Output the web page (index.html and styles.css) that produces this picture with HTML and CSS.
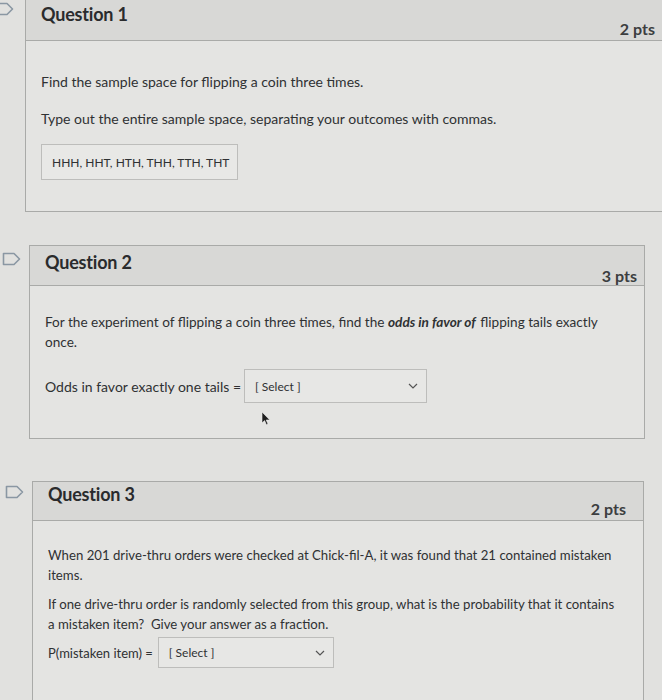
FILE: index.html
```html
<!DOCTYPE html>
<html>
<head>
<meta charset="utf-8">
<link rel="stylesheet" href="styles.css">
</head>
<body>
<div class="topshade"></div>
<div class="quiz">
  <section class="question q1">
    <div class="flag"><svg width="20" height="16" viewBox="0 0 20 16"><path d="M1.5 2.5h10.5l5.5 5.5-5.5 5.5H1.5z" fill="none" stroke="#8a97a3" stroke-width="1.6" stroke-linejoin="round"/></svg></div>
    <div class="card">
      <header class="head">
        <h2 class="title">Question 1</h2>
        <span class="pts">2 pts</span>
      </header>
      <div class="body">
        <p class="txt">Find the sample space for flipping a coin three times.</p>
        <p class="txt gap">Type out the entire sample space, separating your outcomes with commas.</p>
        <div class="answer">HHH, HHT, HTH, THH, TTH, THT</div>
      </div>
    </div>
  </section>

  <section class="question q2">
    <div class="flag"><svg width="20" height="16" viewBox="0 0 20 16"><path d="M1.5 2.5h10.5l5.5 5.5-5.5 5.5H1.5z" fill="none" stroke="#8a97a3" stroke-width="1.6" stroke-linejoin="round"/></svg></div>
    <div class="card">
      <header class="head">
        <h2 class="title">Question 2</h2>
        <span class="pts">3 pts</span>
      </header>
      <div class="body">
        <p class="txt">For the experiment of flipping a coin three times, find the <b class="em">odds in favor of</b> flipping tails exactly once.</p>
        <div class="line">
          <span class="label">Odds in favor exactly one tails =</span>
          <div class="select s2"><span>[ Select ]</span><svg width="10" height="6" viewBox="0 0 10 6"><path d="M1 1l4 4 4-4" fill="none" stroke="#555" stroke-width="1.2"/></svg></div>
        </div>
        <svg class="cursor" width="10" height="15" viewBox="0 0 10 15"><path d="M1 1v11l2.6-2.4 1.8 4.2 1.6-.7-1.8-4.1H8.8z" fill="#1e1e1e" stroke="#f2f2f2" stroke-width="0.6" stroke-linejoin="round"/></svg>
      </div>
    </div>
  </section>

  <section class="question q3">
    <div class="flag"><svg width="20" height="16" viewBox="0 0 20 16"><path d="M1.5 2.5h10.5l5.5 5.5-5.5 5.5H1.5z" fill="none" stroke="#8a97a3" stroke-width="1.6" stroke-linejoin="round"/></svg></div>
    <div class="card">
      <header class="head">
        <h2 class="title">Question 3</h2>
        <span class="pts">2 pts</span>
      </header>
      <div class="body">
        <p class="txt">When 201 drive-thru orders were checked at Chick-fil-A, it was found that 21 contained mistaken items.</p>
        <p class="txt gap">If one drive-thru order is randomly selected from this group, what is the probability that it contains a mistaken item?&nbsp; Give your answer as a fraction.</p>
        <div class="line">
          <span class="label small">P(mistaken item) =</span>
          <div class="select s3"><span>[ Select ]</span><svg width="10" height="6" viewBox="0 0 10 6"><path d="M1 1l4 4 4-4" fill="none" stroke="#555" stroke-width="1.2"/></svg></div>
        </div>
      </div>
    </div>
  </section>
</div>
</body>
</html>
```

FILE: styles.css
```css
html, body {
  margin: 0;
  padding: 0;
}
body {
  width: 662px;
  height: 700px;
  overflow: hidden;
  background: #e1e1df;
  font-family: Lato, "Open Sans", sans-serif;
  color: #2f3133;
  position: relative;
}
.topshade {
  position: absolute;
  left: 300px;
  right: 0;
  top: 0;
  height: 2px;
  background: linear-gradient(90deg, rgba(60,70,80,0), rgba(60,70,80,0.7));
}
.quiz {
  display: flex;
  flex-direction: column;
}
.question {
  display: flex;
  align-items: flex-start;
}
.flag {
  display: flex;
  flex-shrink: 0;
}
.card {
  display: flex;
  flex-direction: column;
  flex-shrink: 0;
  border: 1px solid #a9aaa8;
  background: #e4e4e2;
  position: relative;
}
.head {
  display: flex;
  justify-content: space-between;
  align-items: flex-start;
  background: #d8d8d6;
  border-bottom: 1px solid #a9aaa8;
  padding: 0 7px 0 15px;
}
.title {
  margin: 0;
  font-size: 18px;
  font-weight: 700;
  color: #2a2b2d;
  letter-spacing: -0.2px;
}
.pts {
  font-size: 16px;
  font-weight: 700;
  color: #3c3e40;
}
.body {
  display: flex;
  flex-direction: column;
  align-items: flex-start;
  padding: 0 15px;
}
.txt {
  margin: 0;
  font-size: 14px;
  line-height: 20px;
}
.em {
  font-weight: 700;
  font-style: italic;
  padding-right: 1px;
}
.line {
  display: flex;
  align-items: center;
}
.label {
  font-size: 14px;
  margin-right: 3px;
}
.label.small {
  font-size: 13px;
  margin-right: 5px;
}
.answer {
  font-size: 12px;
  white-space: nowrap;
  border: 1px solid #bdbdbb;
  background: #e8e8e6;
  padding: 0 8px 0 10px;
  height: 34px;
  display: flex;
  align-items: center;
}
.select {
  display: flex;
  align-items: center;
  justify-content: space-between;
  border: 1px solid #bdbdbb;
  background: #e7e7e5;
  font-size: 12px;
  padding: 0 8px 0 10px;
  box-sizing: border-box;
}
.cursor {
  position: absolute;
}

/* Question 1 */
.q1 {
  margin-top: -2px;
  margin-left: -5px;
}
.q1 .flag {
  width: 30px;
  padding-top: 3px;
}
.q1 .card {
  width: 648px;
}
.q1 .head {
  height: 41px;
  padding-right: 19px;
}
.q1 .title {
  padding-top: 4px;
}
.q1 .pts {
  padding-top: 20px;
}
.q1 .body {
  padding-top: 31px;
  padding-bottom: 31px;
}
.q1 .gap {
  margin-top: 17px;
  margin-bottom: 15px;
}

/* Question 2 */
.q2 {
  margin-top: 33px;
  margin-left: 2px;
}
.q2 .flag {
  width: 27px;
  padding-top: 6px;
}
.q2 .card {
  width: 614px;
}
.q2 .head {
  height: 39px;
}
.q2 .title {
  padding-top: 5px;
}
.q2 .pts {
  padding-top: 20px;
}
.q2 .body {
  padding-top: 26px;
  padding-bottom: 35px;
  padding-right: 30px;
}
.q2 .txt {
  font-size: 13.6px;
}
.q2 .line {
  margin-top: 17px;
}
.s2 {
  width: 183px;
  height: 34px;
}
.q2 .cursor {
  left: 231px;
  top: 165px;
}

/* Question 3 */
.q3 {
  margin-top: 42px;
  margin-left: 5px;
}
.q3 .flag {
  width: 27px;
  padding-top: 3px;
}
.q3 .card {
  width: 610px;
  height: 240px;
}
.q3 .head {
  height: 38px;
}
.q3 .title {
  padding-top: 1px;
}
.q3 .pts {
  padding-top: 17px;
  margin-right: 10px;
}
.q3 .body {
  padding-top: 24px;
  padding-right: 25px;
}
.q3 .txt {
  font-size: 13.2px;
}
.q3 .gap {
  margin-top: 9px;
}
.q3 .line {
  margin-top: 3px;
}
.s3 {
  width: 176px;
  height: 31px;
}
```
